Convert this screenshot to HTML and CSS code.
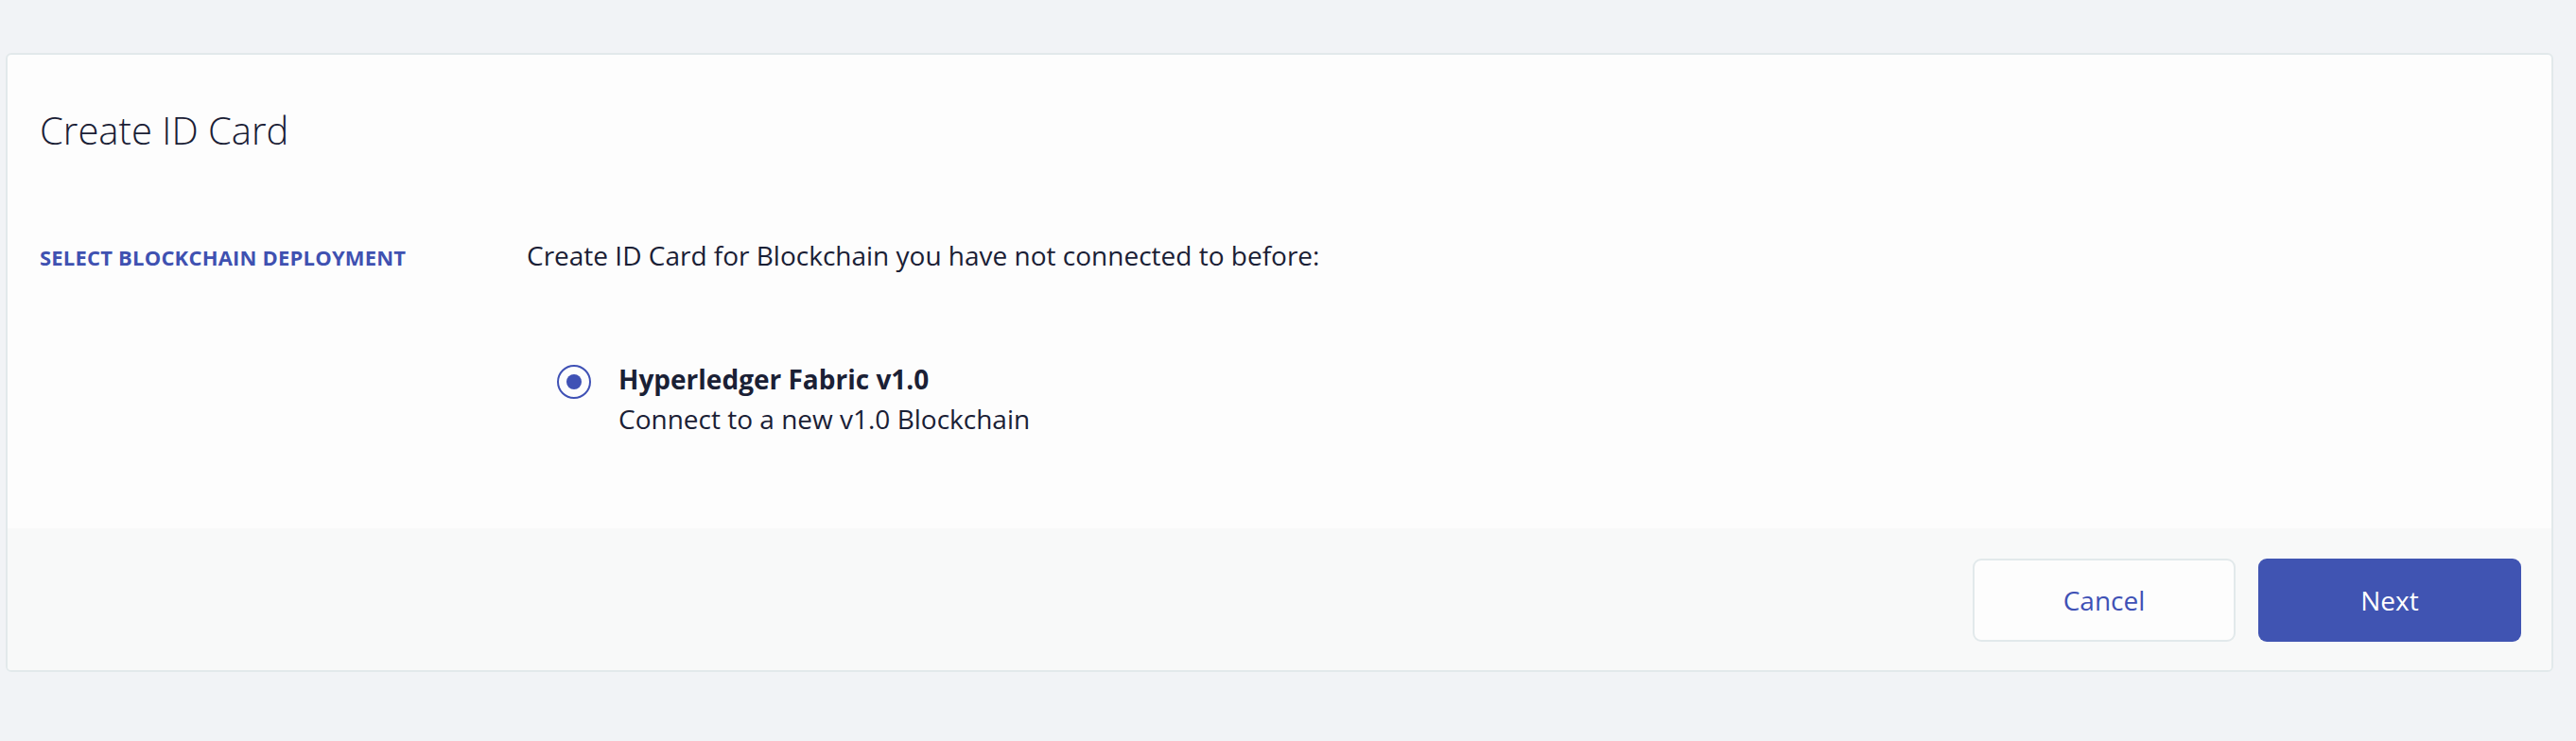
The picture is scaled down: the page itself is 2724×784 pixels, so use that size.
FILE: index.html
```html
<!DOCTYPE html>
<html>
<head>
<meta charset="utf-8">
<title>Create ID Card</title>
<link rel="stylesheet" href="styles.css">
</head>
<body>
  <div class="card">
    <div class="card-body">
      <h1 class="title">Create ID Card</h1>
      <div class="row">
        <div class="label">SELECT BLOCKCHAIN DEPLOYMENT</div>
        <div class="content">
          <p class="intro">Create ID Card for Blockchain you have not connected to before:</p>
          <div class="option">
            <span class="radio"><span class="dot"></span></span>
            <div class="option-text">
              <div class="option-title">Hyperledger Fabric v1.0</div>
              <div class="option-desc">Connect to a new v1.0 Blockchain</div>
            </div>
          </div>
        </div>
      </div>
    </div>
    <div class="card-footer">
      <button class="btn btn-secondary">Cancel</button>
      <button class="btn btn-primary">Next</button>
    </div>
  </div>
</body>
</html>
```

FILE: styles.css
```css
* { box-sizing: border-box; }

html, body {
  margin: 0;
  background: #f1f3f6;
}

body {
  padding: 56px 24px 0 6px;
  font-family: "Open Sans", "Noto Sans", sans-serif;
  color: #1a2035;
}

.card {
  background: #fdfdfd;
  border: 2px solid #e2e9eb;
  border-radius: 6px;
  overflow: hidden;
}

.card-body {
  padding: 56px 34px 95px 34px;
}

.title {
  margin: 0;
  font-size: 40px;
  line-height: 48px;
  font-weight: 300;
  color: #1a2035;
}

.row {
  display: flex;
  align-items: baseline;
  margin-top: 88px;
}

.label {
  width: 515px;
  flex: none;
  font-size: 22px;
  letter-spacing: 0.2px;
  font-weight: 700;
  color: #3f51b1;
  line-height: 40px;
}

.content {
  flex: 1;
}

.intro {
  margin: 0;
  font-size: 28px;
  line-height: 40px;
  font-weight: 400;
}

.option {
  display: flex;
  align-items: flex-start;
  margin-top: 90px;
  margin-left: 32px;
}

.radio {
  width: 36px;
  height: 36px;
  margin-top: 6px;
  border: 2px solid #3f51b5;
  border-radius: 50%;
  display: flex;
  align-items: center;
  justify-content: center;
  flex: none;
}

.dot {
  width: 16px;
  height: 16px;
  border-radius: 50%;
  background: #3f51b5;
}

.option-text {
  margin-left: 29px;
}

.option-title {
  font-size: 28px;
  line-height: 42px;
  font-weight: 700;
  color: #1a2035;
}

.option-desc {
  font-size: 28px;
  line-height: 42px;
  font-weight: 400;
}

.card-footer {
  background: #f8f9f9;
  display: flex;
  justify-content: flex-end;
  gap: 24px;
  padding: 32px 32px 30px 32px;
}

.btn {
  width: 278px;
  height: 88px;
  border-radius: 9px;
  font-family: "Open Sans", "Noto Sans", sans-serif;
  font-size: 28px;
  font-weight: 400;
  cursor: pointer;
}

.btn-secondary {
  background: #fdfdfd;
  border: 2px solid #e2e9eb;
  color: #3f51b5;
}

.btn-primary {
  background: #4054b2;
  border: none;
  color: #ffffff;
}
```
